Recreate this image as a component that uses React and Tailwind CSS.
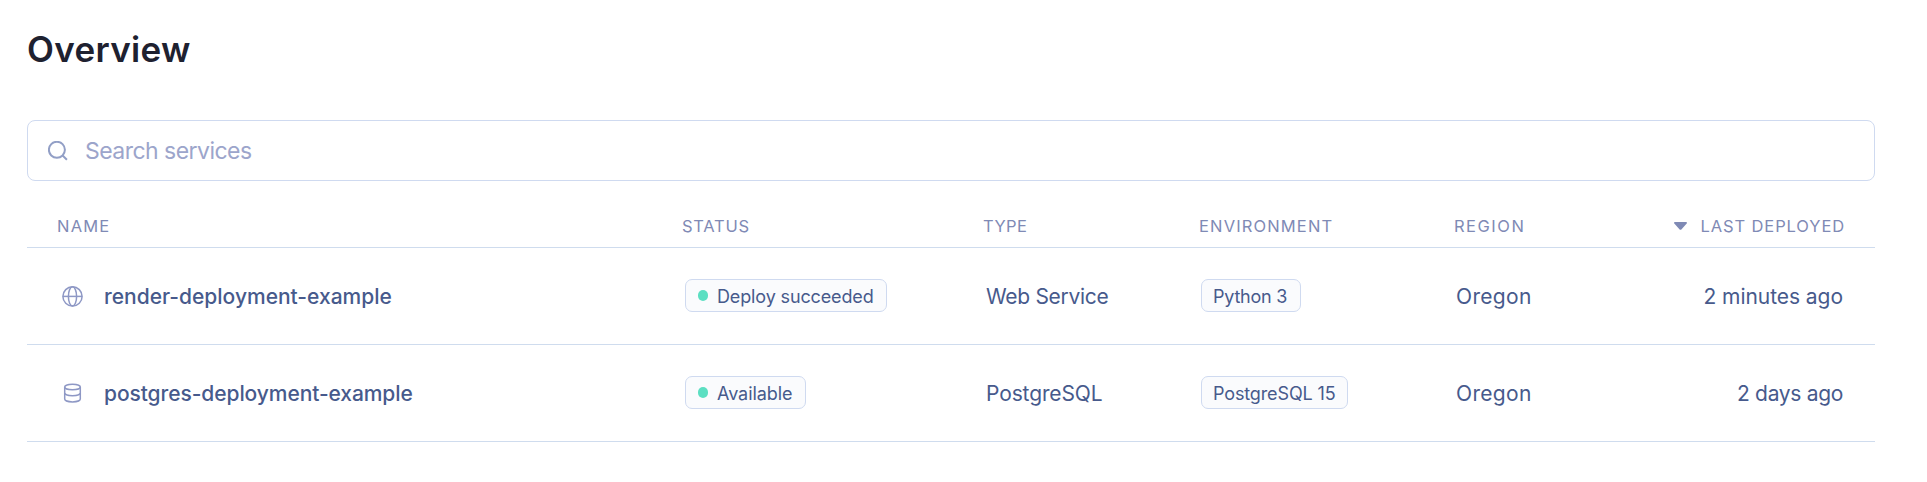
const columns = 'grid grid-cols-[656px_301px_215px_255px_200px_1fr] items-center border-b border-[#cfdcee]';

function SearchIcon() {
  return (
    <svg className="h-5 w-5 shrink-0 text-[#929fc6]" viewBox="0 0 20 20" fill="none" stroke="currentColor" strokeWidth="2">
      <circle cx="8.9" cy="8.8" r="8" />
      <path d="M14.6 14.5l4.3 4.2" />
    </svg>
  );
}

function GlobeIcon() {
  return (
    <svg className="-mt-0.5 h-[22px] w-[22px] text-[#8e98c5]" viewBox="0 0 22 22" fill="none" stroke="currentColor" strokeWidth="1.5">
      <circle cx="11.5" cy="11.4" r="9.6" />
      <ellipse cx="11.5" cy="11.4" rx="4.1" ry="9.6" />
      <path d="M1.9 11.4h19.2" />
    </svg>
  );
}

function DatabaseIcon() {
  return (
    <svg className="-mt-0.5 h-[22px] w-[22px] text-[#8e98c5]" viewBox="0 0 22 22" fill="none" stroke="currentColor" strokeWidth="1.5">
      <ellipse cx="11.5" cy="5" rx="7.8" ry="2.8" />
      <path d="M3.7 5v12c0 1.6 3.4 2.9 7.8 2.9s7.8-1.3 7.8-2.9V5" />
      <path d="M3.7 11c0 1.5 3.4 2.7 7.8 2.7s7.8-1.2 7.8-2.7" />
    </svg>
  );
}

function SortIcon() {
  return (
    <svg className="mr-3.5 h-2 w-[13px] shrink-0 text-[#7f8ab5]" viewBox="0 0 13 8" fill="currentColor">
      <path d="M1 0h11c1 0 1.3.9.7 1.6L7.6 7.2c-.7.8-1.5.8-2.2 0L.3 1.6C-.3.9 0 0 1 0z" />
    </svg>
  );
}

function Pill({ children, dot, className }) {
  return (
    <span className={`flex h-[33px] items-center whitespace-nowrap rounded-[7px] border border-[#cfdaf0] bg-[#fafbfd] text-[18px] ${className}`}>
      {dot && <span className="mr-[9px] h-[11px] w-[10px] shrink-0 rounded-full bg-[#5cdfc2]" />}
      <span className="mt-0.5">{children}</span>
    </span>
  );
}

const services = [
  {
    icon: <GlobeIcon />,
    name: 'render-deployment-example', nameClass: 'tracking-[0px]',
    status: 'Deploy succeeded', statusClass: 'w-[202px] tracking-[-0.133px]',
    type: 'Web Service', typeClass: 'tracking-[-0.3px]',
    env: 'Python 3', envClass: 'w-[100px] tracking-[-0.228px]',
    region: 'Oregon',
    deployed: '2 minutes ago', deployedClass: 'tracking-[-0.05px]',
  },
  {
    icon: <DatabaseIcon />,
    name: 'postgres-deployment-example', nameClass: 'tracking-[-0.076px]',
    status: 'Available', statusClass: 'w-[121px] tracking-[-0.068px]',
    type: 'PostgreSQL', typeClass: 'tracking-[-0.128px]',
    env: 'PostgreSQL 15', envClass: 'w-[147px] tracking-[-0.133px]',
    region: 'Oregon',
    deployed: '2 days ago', deployedClass: 'tracking-[-0.313px]',
  },
];

export default function App() {
  return (
    <main className="h-[482px] bg-white pl-[27px] pr-[52px] pt-[26px] font-['Inter',sans-serif] text-[#475a8c]">
      <h1 className="h-[94px] text-[35px] font-semibold leading-[46px] tracking-[0.3px] text-[#1e2130]">Overview</h1>
      <div className="flex h-[61px] items-center rounded-lg border border-[#cfdaf0] pl-5">
        <SearchIcon />
        <span className="ml-[17px] mt-0.5 text-[23px] tracking-[-0.529px] text-[#9ca5cb]">Search services</span>
      </div>
      <div className={`${columns} h-[67px] pt-6 text-[16.5px] text-[#7f8ab5]`}>
        <span className="pl-[30px] tracking-[1.2px]">NAME</span>
        <span className="-ml-px tracking-[0.751px]">STATUS</span>
        <span className="-ml-px tracking-[0.43px]">TYPE</span>
        <span className="tracking-[1.142px]">ENVIRONMENT</span>
        <span className="tracking-[1.5px]">REGION</span>
        <span className="flex items-center justify-end whitespace-nowrap pr-[30px] tracking-[0.89px]">
          <SortIcon />
          LAST DEPLOYED
        </span>
      </div>
      {services.map((s) => (
        <div key={s.name} className={`${columns} h-[97px] pt-0.5 text-[21px]`}>
          <span className="flex items-center pl-[34px] font-medium">
            {s.icon}
            <span className={`ml-[21px] ${s.nameClass}`}>{s.name}</span>
          </span>
          <span className="-mt-1 flex pl-0.5">
            <Pill dot className={`pl-3 ${s.statusClass}`}>{s.status}</Pill>
          </span>
          <span className={`pl-0.5 ${s.typeClass}`}>{s.type}</span>
          <span className="-mt-1 flex pl-0.5">
            <Pill className={`pl-[11px] ${s.envClass}`}>{s.env}</Pill>
          </span>
          <span className="pl-0.5 tracking-[0.334px]">{s.region}</span>
          <span className={`pr-[32px] text-right ${s.deployedClass}`}>{s.deployed}</span>
        </div>
      ))}
    </main>
  );
}
